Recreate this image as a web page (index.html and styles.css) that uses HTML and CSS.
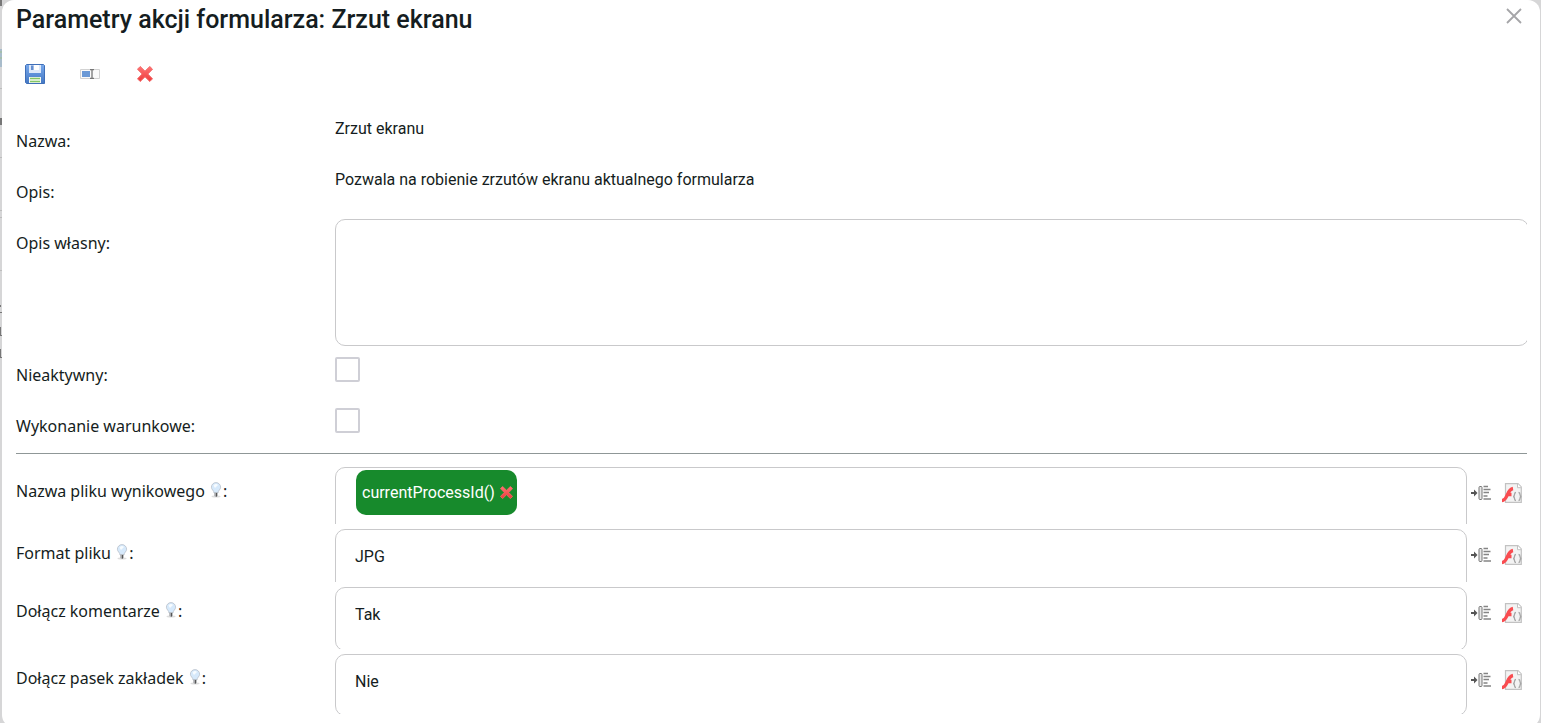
FILE: index.html
```html
<!DOCTYPE html>
<html lang="pl">
<head>
  <meta charset="UTF-8" />
  <meta name="viewport" content="width=device-width, initial-scale=1.0"/>
  <title>Parametry akcji formularza</title>
  <link rel="stylesheet" href="styles.css">
</head>
<body>
  <!-- edge of the dimmed page behind the dialog -->
  <svg class="backdrop-edge" width="2" height="360" aria-hidden="true">
    <path d="M0 0h2v6H0z" fill="#777"/>
    <path d="M0 49h2v18H0z" fill="#a9bccb"/>
    <path d="M0 52h2M0 58h2" stroke="#9fc191"/>
    <path d="M0 88.500h2M0 157.500h2M0 210.500h2M0 217.500h2M0 270.500h2" stroke="#bdbdbd"/>
    <path d="M0 118h2v7H0zM0 305h1v2H0zM0 312h2v1H0zM0 327h1v9H0zM0 335h2v1H0zM0 349h1v9H0zM0 357h2v1H0z" fill="#777"/>
  </svg>

  <!-- shared icons -->
  <svg class="icon-defs" aria-hidden="true">
    <linearGradient id="blueGrad" x2="0" y2="1"><stop stop-color="#78a9ec"/><stop offset="1" stop-color="#4478c4"/></linearGradient>
    <linearGradient id="redGrad" x2="0" y2="1"><stop stop-color="#ff7474"/><stop offset="1" stop-color="#ee3a3a"/></linearGradient>
    <symbol id="cross" viewBox="0 0 16 16">
      <path d="M3.200.500 8 5.200 12.800.500 15.500 3.200 10.800 8l4.700 4.800-2.700 2.700L8 10.800l-4.800 4.700L.500 12.800 5.200 8 .500 3.200z" fill="url(#redGrad)" stroke="#f26767" stroke-width="1" stroke-linejoin="round"/>
    </symbol>
    <symbol id="bulb" viewBox="0 0 12 16">
      <ellipse cx="6" cy="14.500" rx="4.500" ry="1" fill="#ddd"/>
      <path d="M6 .600a4.600 4.600 0 0 0-4.600 4.600C1.400 7.700 4 8.400 4 11h4c0-2.600 2.600-3.300 2.600-5.800A4.600 4.600 0 0 0 6 .600z" fill="#d6e9fb" stroke="#b9c0ca" stroke-width=".8"/>
      <path d="M3.500 3.500Q6 .800 8 3L5 6z" fill="#f7fcff"/>
      <path d="M4.300 10.500h3.400V14L6 15l-1.700-1z" fill="#a7a9ad"/>
      <path d="M6.500 11v3.500" stroke="#555" stroke-width="1"/>
    </symbol>
    <symbol id="insert" viewBox="0 0 20 16">
      <path d="M0 8h4" stroke="#555" stroke-width="2"/>
      <path d="M3 4.500 6.500 8 3 11.500z" fill="#555"/>
      <rect x="8" y="1.500" width="3" height="13" rx="1" fill="#e8e8e8" stroke="#777"/>
      <path d="M12.500 1.500H17M12.500 4.500h7M12.500 7.500H18M12.500 11h4M12.500 14h7.500" stroke="#858585" stroke-width="1.300"/>
    </symbol>
    <symbol id="func" viewBox="0 0 20 20">
      <path d="M3.500.700H16l3.300 3.300v15.300H3.500z" fill="#f3f3f3" stroke="#c2c2c2" stroke-width="1.200"/>
      <path d="M15.500.700v4h4" fill="#fff" stroke="#c2c2c2"/>
      <path d="M0 17.500C6 17.500 4.500 6.500 11 5.500M5 11.500h4.500" fill="none" stroke="#f94c50" stroke-width="3.400"/>
      <path d="M14 9.500c-1.500 0-1.500.800-1.500 2 0 1.200-.300 1.800-1.300 2 1 .200 1.300.800 1.300 2 0 1.200 0 2 1.500 2M16.500 9.500c1.500 0 1.500.800 1.500 2 0 1.200.300 1.800 1.300 2-1 .200-1.300.800-1.300 2 0 1.200 0 2-1.500 2" fill="none" stroke="#a5a5a5" stroke-width="1.300"/>
    </symbol>
  </svg>

  <main class="dialog">
    <header class="dialog-header">
      <h1>Parametry akcji formularza: Zrzut ekranu</h1>
      <button class="close-button" type="button" aria-label="Zamknij">
        <svg width="16" height="16" viewBox="0 0 16 16"><path d="M1 1l14 14M15 1L1 15" stroke="#a5a5a8" stroke-width="1.800"/></svg>
      </button>
    </header>

    <div class="toolbar">
      <button type="button" aria-label="Zapisz">
        <svg width="20" height="20" viewBox="0 0 20 20">
          <path d="M1.500.500h17l1 1v18h-18l-1-1v-17z" fill="url(#blueGrad)" stroke="#3f6fb8"/>
          <path d="M4 1h12v8H4z" fill="#dce8f9"/>
          <path d="M6 1.500h2.500V6H6z" fill="#668fd0"/>
          <path d="M9 1h5v5H9z" fill="#fff"/>
          <path d="M4 13h12v6H4z" fill="#f5faef"/>
          <path d="M5 14.500h10M5 17.500h10" stroke="#82c565" stroke-width="1.700"/>
        </svg>
      </button>
      <button type="button" aria-label="Zmień nazwę">
        <svg width="20" height="10" viewBox="0 0 20 10">
          <path d="M.500.500h19v9H.500z" fill="#fafafa" stroke="#d2d2d2"/>
          <path d="M2 2h8v6H2z" fill="#6b99d6"/>
          <path d="M10 .500h4M12 .500v9M10 9.500h4" stroke="#777" stroke-width="1.300"/>
        </svg>
      </button>
      <button type="button" aria-label="Usuń">
        <svg width="16" height="16"><use href="#cross"/></svg>
      </button>
    </div>

    <form class="params">
      <div class="row">
        <span class="label">Nazwa:</span>
        <span class="value">Zrzut ekranu</span>
      </div>
      <div class="row">
        <span class="label">Opis:</span>
        <span class="value">Pozwala na robienie zrzutów ekranu aktualnego formularza</span>
      </div>
      <div class="row">
        <label class="label" for="ownDesc">Opis własny:</label>
        <div class="textarea-wrap"><textarea id="ownDesc"></textarea></div>
      </div>
      <div class="row">
        <label class="label" for="inactive">Nieaktywny:</label>
        <input class="check" type="checkbox" id="inactive" />
      </div>
      <div class="row">
        <label class="label" for="conditional">Wykonanie warunkowe:</label>
        <input class="check" type="checkbox" id="conditional" />
      </div>

      <hr class="divider" />

      <div class="row param-row">
        <label class="label" for="fileName">Nazwa pliku wynikowego <svg class="bulb"><use href="#bulb"/></svg>:</label>
        <div class="field field-name">
          <div class="box tags">
            <span class="tag">currentProcessId()
              <button type="button" aria-label="Usuń element"><svg width="13" height="13"><use href="#cross"/></svg></button>
            </span>
            <input type="text" id="fileName" />
          </div>
        </div>
        <div class="actions">
          <button type="button" aria-label="Wstaw"><svg width="20" height="16"><use href="#insert"/></svg></button>
          <button type="button" aria-label="Funkcja"><svg width="20" height="20"><use href="#func"/></svg></button>
        </div>
      </div>
      <div class="row param-row">
        <label class="label" for="fileFormat">Format pliku <svg class="bulb"><use href="#bulb"/></svg>:</label>
        <div class="field field-format">
          <select class="box" id="fileFormat"><option>JPG</option></select>
        </div>
        <div class="actions">
          <button type="button" aria-label="Wstaw"><svg width="20" height="16"><use href="#insert"/></svg></button>
          <button type="button" aria-label="Funkcja"><svg width="20" height="20"><use href="#func"/></svg></button>
        </div>
      </div>
      <div class="row param-row">
        <label class="label" for="comments">Dołącz komentarze <svg class="bulb"><use href="#bulb"/></svg>:</label>
        <div class="field">
          <select class="box" id="comments"><option>Tak</option><option>Nie</option></select>
        </div>
        <div class="actions">
          <button type="button" aria-label="Wstaw"><svg width="20" height="16"><use href="#insert"/></svg></button>
          <button type="button" aria-label="Funkcja"><svg width="20" height="20"><use href="#func"/></svg></button>
        </div>
      </div>
      <div class="row param-row">
        <label class="label" for="tabBar">Dołącz pasek zakładek <svg class="bulb"><use href="#bulb"/></svg>:</label>
        <div class="field field-tabs">
          <select class="box" id="tabBar"><option>Nie</option><option>Tak</option></select>
        </div>
        <div class="actions">
          <button type="button" aria-label="Wstaw"><svg width="20" height="16"><use href="#insert"/></svg></button>
          <button type="button" aria-label="Funkcja"><svg width="20" height="20"><use href="#func"/></svg></button>
        </div>
      </div>
    </form>
  </main>
</body>
</html>
```

FILE: styles.css
```css
* {
  box-sizing: border-box;
}

body {
  margin: 0;
  background: #d6d6d7;
  color: #151d21;
  font-family: "Noto Sans", sans-serif;
}

button {
  display: flex;
  align-items: center;
  justify-content: center;
  padding: 0;
  border: none;
  background: none;
  cursor: pointer;
}

.icon-defs {
  position: absolute;
  width: 0;
  height: 0;
}

.backdrop-edge {
  position: absolute;
  top: 0;
  left: 0;
}

.dialog {
  min-height: 100vh;
  margin: 0 1px 0 2px;
  padding: 0 13px 8px 14px;
  background: #fff;
  border-radius: 12px;
}

.dialog-header {
  display: flex;
  justify-content: space-between;
  align-items: flex-start;
  height: 40px;
}

.dialog-header h1 {
  margin: 0;
  font-family: Roboto, sans-serif;
  font-size: 25px;
  line-height: 40px;
  font-weight: 500;
}

.close-button {
  width: 26px;
  height: 32px;
}

.toolbar {
  display: flex;
  gap: 17px;
  padding: 15px 0 24px;
}

.toolbar button {
  width: 38px;
  height: 38px;
}

.row {
  display: grid;
  grid-template-columns: 319px 1fr;
  align-items: start;
  min-height: 51px;
}

.label {
  padding-top: 12px;
  font-size: 16px;
  line-height: 24px;
}

.value {
  font-family: Roboto, sans-serif;
  font-size: 16px;
  line-height: 24px;
}

.textarea-wrap {
  height: 132px;
  overflow: hidden;
}

.textarea-wrap textarea {
  display: block;
  width: calc(100% + 2px);
  height: 127px;
  padding: 12px 20px;
  border: 1px solid #c9c9cb;
  border-radius: 10px;
  resize: none;
  font: inherit;
}

.check {
  appearance: none;
  width: 25px;
  height: 25px;
  margin: 6px 0 0;
  border: 2px solid #cfcfd6;
  border-radius: 2px;
  background: #fff;
}

.divider {
  height: 1px;
  margin: 0 0 13px;
  border: none;
  background: #8f9797;
}

.param-row {
  grid-template-columns: 319px 1fr 60px;
  min-height: 0;
  margin-bottom: 5px;
}

.bulb {
  width: 12px;
  height: 16px;
  margin: 0 1px;
  vertical-align: -1px;
}

/* the boxes are taller than their rows, the bottom edge is cut */
.field {
  height: 62px;
  overflow: hidden;
}

.field-name {
  height: 57px;
}

.field-format {
  height: 53px;
}

.field-tabs {
  height: 60px;
}

.box {
  display: block;
  width: 100%;
  height: 64px;
  padding: 0 19px 10px;
  border: 1px solid #c9c9cb;
  border-radius: 10px;
  appearance: none;
  background: #fff;
  color: #151d21;
  font-family: Roboto, sans-serif;
  font-size: 16px;
}

.field-tabs .box {
  height: 62px;
  padding-bottom: 8px;
}

.tags {
  display: flex;
  align-items: flex-start;
  height: 68px;
  padding: 2px 20px;
}

.tags input {
  flex: 1;
  min-width: 0;
  height: 45px;
  border: none;
  outline: none;
  font: inherit;
}

.tag {
  display: flex;
  align-items: center;
  gap: 5px;
  height: 45px;
  padding: 0 4px 0 6px;
  border-radius: 10px;
  background: #178a2c;
  color: #fff;
}

.actions {
  display: flex;
  justify-content: space-between;
  align-items: center;
  height: 52px;
  padding: 0 5px 0 4px;
}
```
